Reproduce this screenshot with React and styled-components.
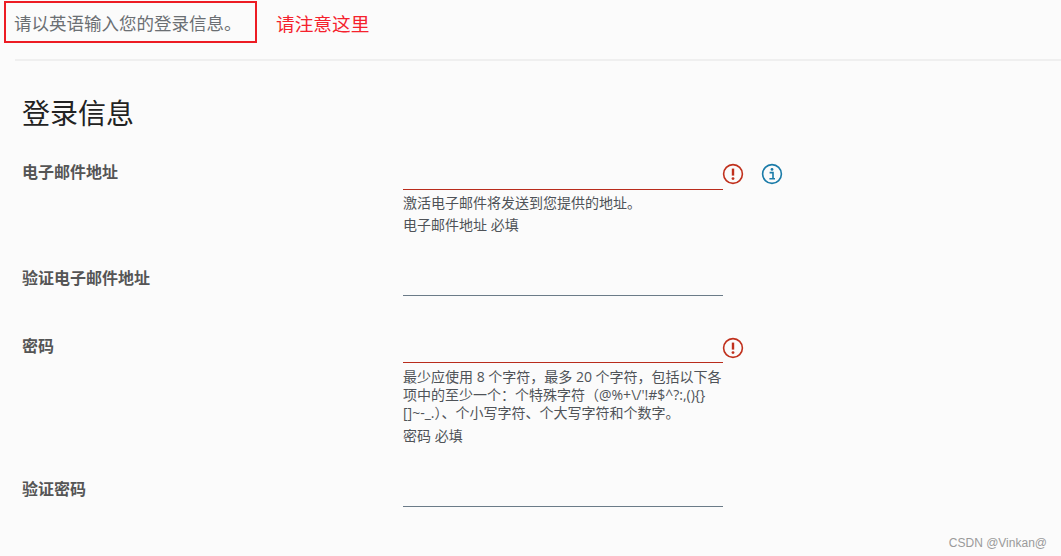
import styled, { createGlobalStyle } from 'styled-components';

const GlobalStyle = createGlobalStyle`
  html, body {
    margin: 0;
    padding: 0;
    background: #fbfbfb;
    overflow: hidden;
  }
  body {
    font-family: "Open Sans", "Noto Sans CJK SC", sans-serif;
  }
`;

const Page = styled.div`
  position: relative;
  width: 1061px;
  height: 556px;
  padding-top: 1px;
  box-sizing: border-box;
  overflow: hidden;
`;

const Notice = styled.div`
  display: flex;
  align-items: center;
  padding-left: 4px;
`;

const NoticeBox = styled.div`
  width: 253px;
  height: 42px;
  box-sizing: border-box;
  border: 2px solid #ed1c24;
  padding-left: 8px;
  display: flex;
  align-items: center;
  font-size: 17.5px;
  color: #6b6f73;
`;

const Annotation = styled.div`
  margin-left: 19px;
  font-size: 18.7px;
  color: #f5222d;
`;

const Divider = styled.div`
  height: 2px;
  margin: 16px 0 0 15px;
  background: #efefef;
`;

const Title = styled.h1`
  margin: 32px 0 0 22px;
  font-size: 28px;
  line-height: 40px;
  font-weight: 400;
  color: #222;
`;

const Row = styled.div`
  display: grid;
  grid-template-columns: 381px 320px auto;
  margin-left: 22px;
  margin-top: ${props => props.$top}px;
`;

const Label = styled.div`
  font-size: 16px;
  line-height: 22px;
  font-weight: 700;
  color: #555;
`;

const Field = styled.div`
  display: flex;
  flex-direction: column;
`;

const Input = styled.div`
  height: ${props => props.$height}px;
  border-bottom: 1px solid ${props => props.$error ? '#b92c1c' : '#6b7b88'};
`;

const Help = styled.div`
  margin-top: ${props => props.$top || 0}px;
  font-size: 14px;
  line-height: 18px;
  color: #4f5358;
  white-space: nowrap;
`;

const Icons = styled.div`
  display: flex;
  gap: 17px;
  height: 22px;
  margin-top: ${props => props.$top}px;
  margin-left: -1px;
`;

const Watermark = styled.div`
  position: absolute;
  right: 14px;
  bottom: 6px;
  font-family: "Liberation Sans", "Noto Sans CJK SC", sans-serif;
  font-size: 12px;
  color: #9a9a9a;
`;

const ErrorIcon = () => (
  <svg width="22" height="22" viewBox="0 0 22 22">
    <circle cx="11" cy="11" r="9.4" fill="none" stroke="#c0301c" strokeWidth="1.6" />
    <path d="M11 5.6v7" stroke="#c0301c" strokeWidth="2.4" />
    <circle cx="11" cy="15.6" r="1.4" fill="#c0301c" />
  </svg>
);

const InfoIcon = () => (
  <svg width="22" height="22" viewBox="0 0 22 22">
    <circle cx="11" cy="11" r="9.4" fill="none" stroke="#1a7ba8" strokeWidth="1.6" />
    <circle cx="11" cy="6.4" r="1.4" fill="#1a7ba8" />
    <path d="M8.6 9.6H12v6M8.4 15.8h5.6" fill="none" stroke="#1a7ba8" strokeWidth="1.6" />
  </svg>
);

export default function App() {
  return (
    <Page>
      <GlobalStyle />
      <Notice>
        <NoticeBox>请以英语输入您的登录信息。</NoticeBox>
        <Annotation>请注意这里</Annotation>
      </Notice>
      <Divider />
      <Title>登录信息</Title>

      <Row $top={28}>
        <Label>电子邮件地址</Label>
        <Field>
          <Input $height={28} $error />
          <Help $top={4}>激活电子邮件将发送到您提供的地址。</Help>
          <Help $top={4}>电子邮件地址 必填</Help>
        </Field>
        <Icons $top={2}>
          <ErrorIcon />
          <InfoIcon />
        </Icons>
      </Row>

      <Row $top={33}>
        <Label>验证电子邮件地址</Label>
        <Field>
          <Input $height={28} />
        </Field>
      </Row>

      <Row $top={39}>
        <Label>密码</Label>
        <Field>
          <Input $height={27} $error />
          <Help $top={5}>
            最少应使用 8 个字符，最多 20 个字符，包括以下各
            <br />
            {"项中的至少一个：个特殊字符（@%+\\/'!#$^?:,(){}"}
            <br />
            []~-_.）、个小写字符、个大写字符和个数字。
          </Help>
          <Help $top={5}>密码 必填</Help>
        </Field>
        <Icons $top={2}>
          <ErrorIcon />
        </Icons>
      </Row>

      <Row $top={33}>
        <Label>验证密码</Label>
        <Field>
          <Input $height={28} />
        </Field>
      </Row>

      <Watermark>CSDN @Vinkan@</Watermark>
    </Page>
  );
}
